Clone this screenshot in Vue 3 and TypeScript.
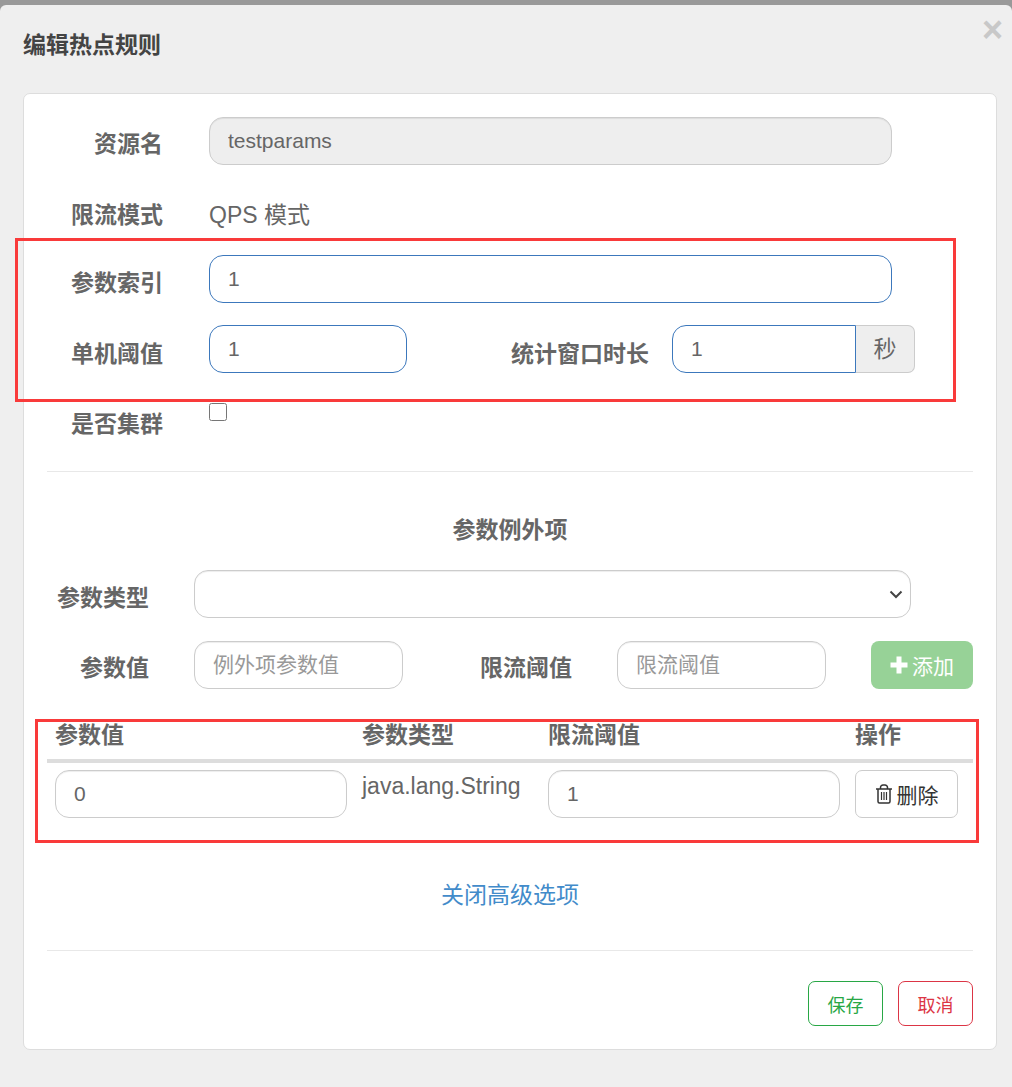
<script setup lang="ts">
const headers: string[] = ['参数值', '参数类型', '限流阈值', '操作']
</script>

<template>
  <div class="dialog">
    <header class="head">
      <h1 class="title">编辑热点规则</h1>
      <span class="close">×</span>
    </header>

    <section class="card">
      <div class="row row-res">
        <label class="label">资源名</label>
        <input class="ctl wide" value="testparams" disabled />
      </div>
      <div class="row row-mode">
        <label class="label">限流模式</label>
        <span class="plain">QPS 模式</span>
      </div>
      <div class="row row-idx">
        <label class="label">参数索引</label>
        <input class="ctl wide focus" value="1" />
      </div>
      <div class="row row-thr">
        <label class="label">单机阈值</label>
        <input class="ctl short focus" value="1" />
        <label class="label stat">统计窗口时长</label>
        <div class="group">
          <input class="ctl focus joined" value="1" />
          <span class="addon">秒</span>
        </div>
      </div>
      <div class="row row-cluster">
        <label class="label">是否集群</label>
        <input class="check" type="checkbox" />
      </div>

      <hr class="rule rule-a" />

      <h2 class="sub">参数例外项</h2>

      <div class="row row-type">
        <label class="label small-col">参数类型</label>
        <div class="select-wrap">
          <select class="ctl select"></select>
          <svg class="chev" width="14" height="9" viewBox="0 0 14 9">
            <path d="M1.500 1.500 7 7l5.500-5.500" fill="none" stroke="#444" stroke-width="2" />
          </svg>
        </div>
      </div>
      <div class="row row-add">
        <label class="label small-col">参数值</label>
        <input class="ctl mini" placeholder="例外项参数值" />
        <label class="label limit">限流阈值</label>
        <input class="ctl mini" placeholder="限流阈值" />
        <button class="add" type="button">
          <svg width="18" height="18" viewBox="0 0 18 18"><path d="M6.500 0.500h5v6h6v5h-6v6h-5v-6h-6v-5h6z" fill="#fff" /></svg>
          <span>添加</span>
        </button>
      </div>

      <table class="tbl">
        <colgroup>
          <col class="c1" /><col class="c2" /><col class="c3" /><col class="c4" />
        </colgroup>
        <thead>
          <tr><th v-for="h in headers" :key="h">{{ h }}</th></tr>
        </thead>
        <tbody>
          <tr>
            <td><input class="ctl cell" value="0" /></td>
            <td class="type">java.lang.String</td>
            <td><input class="ctl cell" value="1" /></td>
            <td>
              <button class="del" type="button">
                <svg width="18" height="20" viewBox="0 0 18 20" fill="none" stroke="#333" stroke-width="1.500">
                  <path d="M1 5h16M3 5v12.500a1.500 1.500 0 0 0 1.500 1.500h9a1.500 1.500 0 0 0 1.500-1.500V5" />
                  <path d="M5.500 5V3.500A2.500 2.500 0 0 1 8 1h2a2.500 2.500 0 0 1 2.500 2.500V5" />
                  <path d="M6.500 8v8M9 8v8M11.500 8v8" stroke-width="1.200" />
                </svg>
                <span>删除</span>
              </button>
            </td>
          </tr>
        </tbody>
      </table>

      <div class="toggle"><a class="link">关闭高级选项</a></div>

      <hr class="rule rule-b" />

      <footer class="foot">
        <button class="act save" type="button">保存</button>
        <button class="act cancel" type="button">取消</button>
      </footer>
    </section>

    <div class="mark mark-a"></div>
    <div class="mark mark-b"></div>
  </div>
</template>

<style>
html, body { margin: 0; background: #999; }
</style>

<style scoped>
* { box-sizing: border-box; }
.dialog {
  position: relative;
  margin-top: 5px;
  height: 1082px;
  background: #efefef;
  border-radius: 6px 6px 0 0;
  padding: 0 15px 0 23px;
  font-family: "Liberation Sans", "Noto Sans CJK SC", sans-serif;
  font-size: 21px;
  color: #666;
  overflow: hidden;
}
.head {
  height: 88px;
  display: flex;
  justify-content: space-between;
  align-items: flex-start;
}
.title {
  margin: 23px 0 0;
  font-size: 23px;
  line-height: 34px;
  font-weight: 700;
  color: #444;
}
.close {
  margin: 7px -6px 0 0;
  font-size: 36px;
  line-height: 36px;
  font-weight: 700;
  color: #c8c8c8;
}
.card {
  width: 974px;
  height: 957px;
  background: #fff;
  border: 1px solid #ddd;
  border-radius: 7px;
  padding: 23px 23px 0;
}
.row { display: flex; }
.label {
  flex: none;
  width: 116px;
  margin-right: 46px;
  text-align: right;
  font-size: 23px;
  font-weight: 700;
  line-height: 34px;
  padding-top: 10px;
  color: #666;
  white-space: nowrap;
}
.ctl {
  display: block;
  height: 48px;
  padding: 0 18px;
  border: 1px solid #ccc;
  border-radius: 14px;
  background: #fff;
  box-shadow: inset 0 1px 1px rgba(0, 0, 0, .075);
  font: inherit;
  color: #666;
  outline: none;
}
.ctl::placeholder { color: #999; opacity: 1; }
.ctl:disabled { background: #eee; color: #666; }
.focus { border-color: #3c78bc; box-shadow: none; }
.wide { width: 683px; }
.short { width: 198px; }
.plain { font-size: 23px; line-height: 34px; padding-top: 7px; color: #666; }
.row-mode { margin-top: 26px; height: 48px; }
.row-mode .label { padding-top: 7px; }
.row-idx { margin-top: 16px; }
.row-idx .label { padding-top: 11px; }
.row-thr { margin-top: 22px; }
.row-thr .label { padding-top: 12px; }
.row-cluster { margin-top: 30px; height: 68px; }
.row-cluster .label { padding-top: 4px; }
.stat { width: 138px; margin-left: 104px; margin-right: 23px; }
.group { display: flex; }
.joined { width: 184px; border-radius: 14px 0 0 14px; }
.addon {
  width: 59px;
  height: 48px;
  background: #eee;
  border: 1px solid #ccc;
  border-left: 0;
  border-radius: 0 7px 7px 0;
  text-align: center;
  font-size: 23px;
  line-height: 47px;
}
.check {
  width: 18px;
  height: 18px;
  margin: 0;
  accent-color: #3c78bc;
}
.rule { margin: 0; border: 0; border-top: 1px solid #e8e8e8; }
.sub {
  margin: 41px 0 23px;
  text-align: center;
  font-size: 23px;
  line-height: 34px;
  font-weight: 700;
  color: #666;
}
.small-col { width: 102px; margin-right: 45px; }
.row-type .label { padding-top: 11px; }
.select-wrap { position: relative; width: 717px; }
.select {
  width: 100%;
  appearance: none;
}
.chev { position: absolute; right: 8px; top: 20px; }
.row-add { margin-top: 23px; }
.mini { width: 209px; }
.limit { width: 92px; margin-left: 77px; margin-right: 45px; }
.add {
  margin-left: 45px;
  width: 103px;
  height: 48px;
  border: 0;
  border-radius: 8px;
  background: #97d297;
  color: #fff;
  font: inherit;
  display: flex;
  align-items: center;
  justify-content: center;
  gap: 4px;
  padding: 0;
}
.tbl {
  margin-top: 29px;
  width: 926px;
  border-collapse: collapse;
  table-layout: fixed;
}
.c1 { width: 307px; }
.c2 { width: 186px; }
.c3 { width: 307px; }
.c4 { width: 126px; }
.tbl th {
  padding: 0 8px 7px;
  text-align: left;
  font-size: 23px;
  line-height: 34px;
  font-weight: 700;
  color: #666;
  border-bottom: 4px solid #ddd;
}
.tbl td {
  padding: 7px 8px 0;
  vertical-align: top;
}
.cell { width: 292px; }
.type { font-size: 23px; line-height: 34px; padding-top: 6px !important; white-space: nowrap; }
.del {
  width: 103px;
  height: 48px;
  border: 1px solid #ccc;
  border-radius: 7px;
  background: #fff;
  color: #333;
  font: inherit;
  display: flex;
  align-items: center;
  justify-content: center;
  gap: 4px;
  padding: 0;
}
.toggle { margin-top: 60px; text-align: center; line-height: 34px; }
.link { font-size: 23px; color: #428bca; }
.rule-b { margin-top: 37px; }
.foot {
  margin-top: 30px;
  display: flex;
  justify-content: flex-end;
  gap: 15px;
}
.act {
  width: 75px;
  height: 45px;
  background: #fff;
  border-radius: 7px;
  font: inherit;
  font-size: 18px;
  padding: 0;
}
.save { border: 1px solid #28a745; color: #28a745; }
.cancel { border: 1px solid #dc3545; color: #dc3545; }
.mark {
  position: absolute;
  border: 3px solid #f93a3a;
  pointer-events: none;
}
.mark-a { left: 15px; top: 233px; width: 941px; height: 164px; }
.mark-b { left: 35px; top: 714px; width: 944px; height: 124px; }
</style>
